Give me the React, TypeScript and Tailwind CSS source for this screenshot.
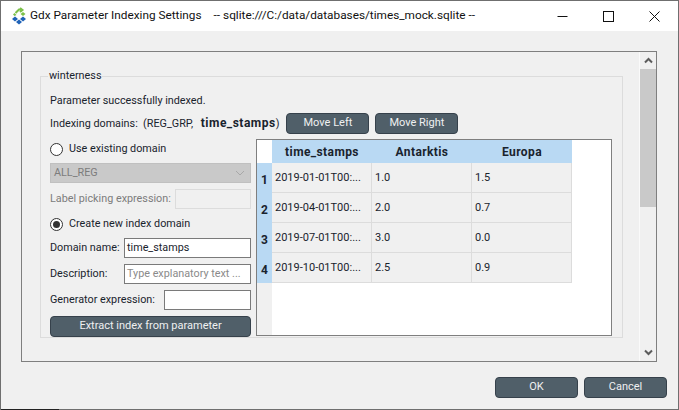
const font = "font-['Roboto','Noto_Sans',sans-serif]";

function Btn({ children, className = "" }: { children: React.ReactNode; className?: string }) {
  return (
    <div className={"flex items-center justify-center h-[21px] rounded-[4px] border border-[#36414b] bg-[#505f69] text-[#eff0f1] text-[11px] whitespace-nowrap " + className}>
      {children}
    </div>
  );
}

function Radio({ checked, label }: { checked?: boolean; label: string }) {
  return (
    <div className="flex items-center h-[18px] pt-[1px] gap-[6px]">
      <div className="w-[13px] h-[13px] rounded-full border border-[#333] bg-white flex items-center justify-center">
        {checked && <div className="w-[7px] h-[7px] rounded-full bg-[#333]" />}
      </div>
      <span>{label}</span>
    </div>
  );
}

function Field({ label, w, h = "h-[20px]", border = "border-[#7a7a7a]", children, dim }: { label: string; w: string; h?: string; border?: string; children?: React.ReactNode; dim?: boolean }) {
  return (
    <div className="flex items-center justify-between whitespace-nowrap">
      <span className={dim ? "text-[#7c7c7c]" : ""}>{label}</span>
      <div className={`${w} ${h} border ${border} ${dim ? "" : "bg-white"} flex items-center px-[2px] overflow-hidden whitespace-nowrap`}>{children}</div>
    </div>
  );
}

const rows = [
  ["1", "2019-01-01T00:...", "1.0", "1.5"],
  ["2", "2019-04-01T00:...", "2.0", "0.7"],
  ["3", "2019-07-01T00:...", "3.0", "0.0"],
  ["4", "2019-10-01T00:...", "2.5", "0.9"],
];

function Table() {
  return (
    <div className="w-[356px] h-[197px] border border-[#7f7f7f] bg-white flex text-[#19232d]">
      <div className="w-[15px] flex flex-col bg-[#f0f0f0]">
        <div className="h-[23px] bg-white" />
        {rows.map((r) => (
          <div key={r[0]} className="h-[30px] pt-[3px] bg-[#b9d9f3] flex items-center justify-center font-bold text-[12px]">{r[0]}</div>
        ))}
      </div>
      <div className="flex flex-col">
        <div className="flex h-[23px] bg-[#b9d9f3] font-bold text-[12px] tracking-[0.4px] w-[300px]">
          <div className="w-[100px] text-center leading-[25px]">time_stamps</div>
          <div className="w-[100px] text-center leading-[25px]">Antarktis</div>
          <div className="w-[100px] text-center leading-[25px]">Europa</div>
        </div>
        {rows.map((r) => (
          <div key={r[0]} className="flex h-[30px] w-[300px]">
            {r.slice(1).map((c, i) => (
              <div key={i} className="w-[100px] pt-[2px] bg-[#f0f0f0] border-r border-b border-[#dcdcdc] flex items-center whitespace-nowrap pl-[3px] text-[11px]">{c}</div>
            ))}
          </div>
        ))}
      </div>
    </div>
  );
}

function Chevron({ up }: { up?: boolean }) {
  return (
    <svg width="9" height="7" viewBox="0 0 9 7" className={up ? "" : "rotate-180"}>
      <path d="M1 5.5 L4.5 2 L8 5.5" fill="none" stroke="#5c5c5c" strokeWidth="2" />
    </svg>
  );
}

export default function App() {
  return (
    <div className={`${font} w-[679px] h-[410px] flex flex-col bg-[#f0f0f0] border-l border-r border-t border-[#6f6f6f] text-[10.8px] text-[#19232d] overflow-hidden`}>
      <div className="h-[30px] shrink-0 bg-white flex items-center text-[11.8px] text-[#111] whitespace-nowrap">
        <svg width="16" height="18" viewBox="0 0 16 18" className="ml-[10px] mr-[3px]">
          <path d="M4.5 6 L8 2.5 L10 2.5 M9 1 L11.5 3 L9 5" fill="none" stroke="#7cc04a" strokeWidth="2" />
          <path d="M3.5 6 L5.5 8 L3.5 9 L2 7.5 Z" fill="#7cc04a" />
          <path d="M12 5 L14.5 7 L12 9 L9.5 7 Z" fill="#7cc04a" />
          <path d="M4 9.5 L7 12 L4 14.5 L1 12 Z" fill="#1f63b8" />
          <path d="M12 9.5 L15 12 L12 14.5 L9 12 Z" fill="#1f63b8" />
          <path d="M8 12.5 L11 15 L8 17.5 L5 15 Z" fill="#1f63b8" />
        </svg>
        <span>Gdx Parameter Indexing Settings</span>
        <span className="ml-[12px]">-- sqlite:///C:/data/databases/times_mock.sqlite --</span>
        <div className="ml-auto flex items-center">
          <svg width="11" height="11" viewBox="0 0 11 11" className="mr-[35px]"><path d="M0.5 5.5 H10.5" stroke="#111" fill="none" /></svg>
          <svg width="11" height="11" viewBox="0 0 11 11" className="mr-[35px]"><rect x="0.5" y="0.5" width="10" height="10" stroke="#111" fill="none" /></svg>
          <svg width="11" height="11" viewBox="0 0 11 11" className="mr-[18px]"><path d="M0.5 0.5 L10.5 10.5 M10.5 0.5 L0.5 10.5" stroke="#111" fill="none" /></svg>
        </div>
      </div>

      <div className="ml-[20px] mr-[21px] mt-[20px] h-[311px] border border-[#7f7f7f] flex shrink-0">
        <div className="flex-1 pl-[18px] pt-[17px]">
          <fieldset className="w-[583px] h-[269px] border border-[#dcdcdc] pl-[9px] pr-[9px] pt-0">
            <legend className="px-[1px] ml-[-2px] leading-[14px]">winterness</legend>
            <div className="h-[17px] leading-[17px] mt-[9px]">Parameter successfully indexed.</div>
            <div className="flex items-center mt-[4px] h-[21px] whitespace-nowrap">
              <span>Indexing domains:&nbsp; (REG_GRP, <b className="text-[12px] tracking-[0.5px] ml-[5px]">time_stamps</b>)</span>
              <Btn className="w-[83px] ml-[7px]">Move Left</Btn>
              <Btn className="w-[83px] ml-[6px]">Move Right</Btn>
            </div>
            <div className="flex mt-[5px] gap-[5px]">
              <div className="w-[201px] flex flex-col pt-[1px]">
                <Radio label="Use existing domain" />
                <div className="mt-[5px] h-[20px] bg-[#c9c9c9] border border-[#c0c0c0] text-[#7c7c7c] flex items-center justify-between px-[3px]">
                  <span>ALL_REG</span>
                  <svg width="10" height="6" viewBox="0 0 10 6" className="mr-[2px]"><path d="M1 1 L5 5 L9 1" stroke="#a8a8a8" fill="none" /></svg>
                </div>
                <div className="mt-[6px]">
                  <Field label="Label picking expression:" w="w-[76px]" border="border-[#dcdcdc]" dim />
                </div>
                <div className="mt-[6px]"><Radio checked label="Create new index domain" /></div>
                <div className="mt-[5px]"><Field label="Domain name:" w="w-[127px]">time_stamps</Field></div>
                <div className="mt-[6px]"><Field label="Description:" w="w-[127px]"><span className="text-[#8a8a8a]">Type explanatory text ...</span></Field></div>
                <div className="mt-[6px]"><Field label="Generator expression:" w="w-[87px]" /></div>
                <Btn className="mt-[6px]">Extract index from parameter</Btn>
              </div>
              <Table />
            </div>
          </fieldset>
        </div>
        <div className="w-[17px] shrink-0 border-l border-[#fafafa] flex flex-col items-center">
          <div className="h-[17px] flex items-center justify-center"><Chevron up /></div>
          <div className="h-[138px] w-full bg-[#c9c9c9]" />
          <div className="flex-1" />
          <div className="h-[17px] flex items-center justify-center"><Chevron /></div>
        </div>
      </div>

      <div className="flex justify-end gap-[6px] mt-[15px] mr-[11px]">
        <Btn className="w-[83px]">OK</Btn>
        <Btn className="w-[83px]">Cancel</Btn>
      </div>
      <div className="mt-auto h-[1px] shrink-0 bg-[#6f6f6f]">
        <div className="h-[1px] w-[58px] bg-[#222]" />
      </div>
    </div>
  );
}
